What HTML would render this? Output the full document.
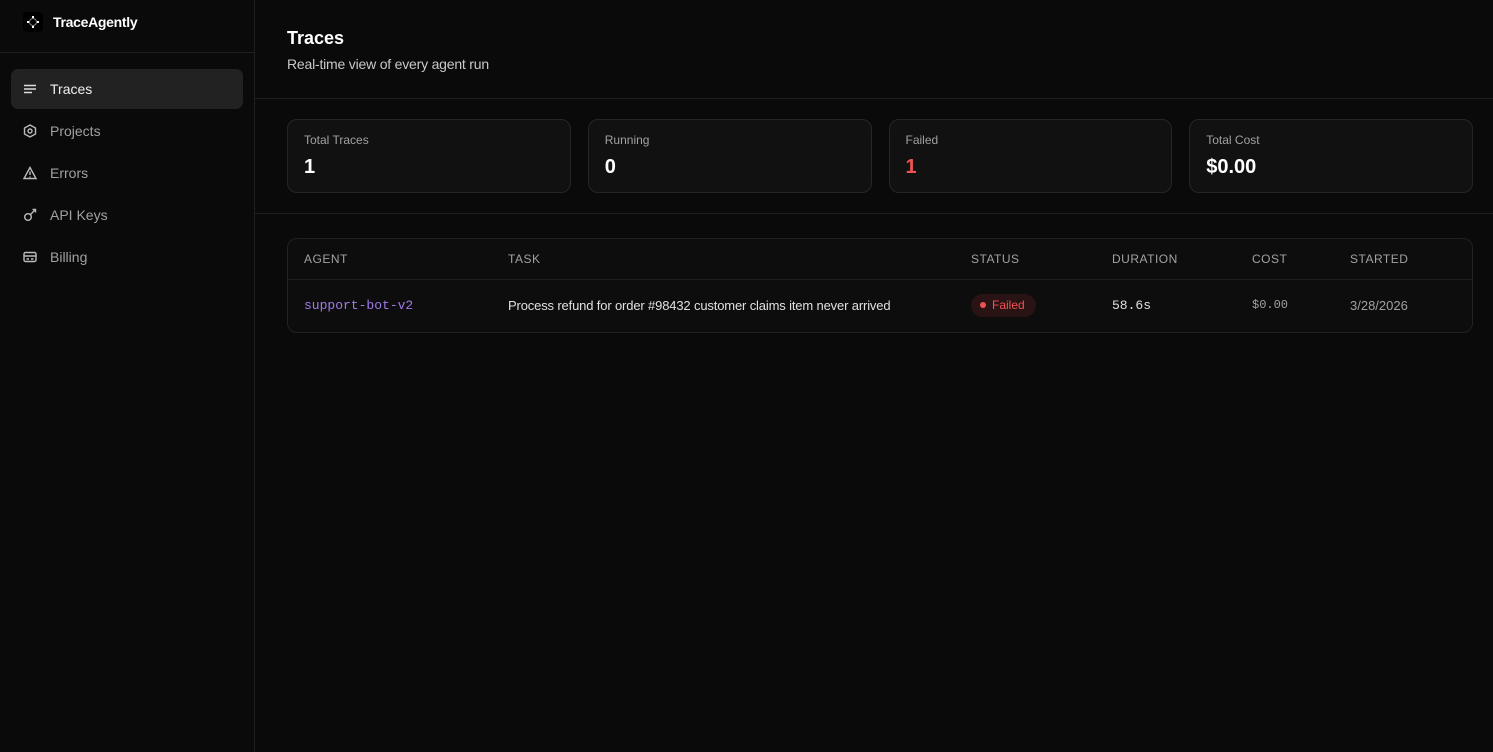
<!DOCTYPE html>
<html><head><meta charset="utf-8"><style>
*{box-sizing:border-box;margin:0;padding:0}
body{width:1493px;height:752px;background:#0a0a0a;font-family:"Liberation Sans",sans-serif;color:#ededed;position:relative;overflow:hidden}
.side{position:absolute;left:0;top:0;width:255px;height:752px;border-right:1px solid #1f1f1f}
.logo{height:53px;border-bottom:1px solid #1f1f1f;display:flex;align-items:center;padding-left:23px;padding-bottom:9px}
.lbox{width:20px;height:20px;background:#000;border-radius:4px;margin-right:10px;display:flex;align-items:center;justify-content:center}
.lt{font-size:14px;font-weight:bold;color:#fff;letter-spacing:-0.3px}
.nav{padding:16px 11px}
.it{height:40px;border-radius:7px;display:flex;align-items:center;padding-left:12px;font-size:14px;color:#a1a1a1;margin-bottom:2px}
.it.a{background:#222;color:#f0f0f0}
.it svg{margin-right:13px}
.main{position:absolute;left:255px;top:0;width:1238px}
.hd{height:99px;border-bottom:1px solid #1f1f1f;padding:27px 32px}
.hd h1{font-size:18px;font-weight:bold;color:#fff;line-height:22px}
.hd p{font-size:14px;color:#c8c8c8;margin-top:7px;letter-spacing:-0.2px}
.stats{height:115px;border-bottom:1px solid #1f1f1f;padding:20px 20px 20px 32px;display:flex;gap:17px}
.c{flex:1;height:74px;border:1px solid #262626;border-radius:10px;background:#111;padding:13px 16px}
.c .l{font-size:12px;color:#a1a1a1}
.c .v{font-size:20px;font-weight:bold;color:#fff;margin-top:9px}
.tbl{position:absolute;left:32px;top:238px;width:1186px;height:95px;border:1px solid #222;border-radius:10px;background:#0d0d0d;overflow:hidden}
.th{height:41px;border-bottom:1px solid #1f1f1f;position:relative;font-size:12px;color:#a1a1a1;letter-spacing:0.5px}
.tr{height:53px;position:relative;font-size:13px}
.th span,.tr span{position:absolute}
.th span{top:13px}
.tr span{top:18px}
.m{font-family:"Liberation Mono",monospace}
.badge{top:14px!important;background:#2a1315;color:#f05252;border-radius:12px;padding:4px 11px 4px 9px;font-size:12px;height:23px}
.badge i{display:inline-block;width:6px;height:6px;border-radius:3px;background:#f05252;margin-right:6px;vertical-align:1px}
</style></head><body>
<div class="side">
<div class="logo"><div class="lbox"><svg width="14" height="14" viewBox="0 0 14 14"><circle cx="7" cy="7" r="3.5" fill="none" stroke="#888" stroke-width="1"/><rect x="6" y="1" width="2" height="2" fill="#fff"/><rect x="6" y="11" width="2" height="2" fill="#fff"/><rect x="1" y="6" width="2" height="2" fill="#fff"/><rect x="11" y="6" width="2" height="2" fill="#fff"/></svg></div><span class="lt">TraceAgently</span></div>
<div class="nav">
<div class="it a"><svg width="14" height="14" viewBox="0 0 14 14" stroke="#ddd" stroke-width="1.5"><path d="M1 3.5h12M1 7h12M1 10.5h8"/></svg>Traces</div>
<div class="it"><svg width="14" height="14" viewBox="0 0 14 14" fill="none" stroke="#bbb" stroke-width="1.4"><path d="M7 1l5.5 3v6L7 13 1.5 10V4z"/><circle cx="7" cy="7" r="2"/></svg>Projects</div>
<div class="it"><svg width="14" height="14" viewBox="0 0 14 14" fill="none" stroke="#bbb" stroke-width="1.4"><path d="M7 1.5L13 12.5H1z"/><path d="M7 5.5v3.5M7 10.5v1"/></svg>Errors</div>
<div class="it"><svg width="14" height="14" viewBox="0 0 14 14" fill="none" stroke="#bbb" stroke-width="1.4"><circle cx="5" cy="9" r="3.3"/><path d="M7.5 6.5L12.5 1.5M9.5 1.5h3v3"/></svg>API Keys</div>
<div class="it"><svg width="14" height="14" viewBox="0 0 14 14" fill="none" stroke="#bbb" stroke-width="1.4"><rect x="1" y="2.5" width="12" height="9" rx="1.5"/><path d="M1 6h12M3.5 9h2.5M8 9h2.5"/></svg>Billing</div>
</div></div>
<div class="main">
<div class="hd"><h1>Traces</h1><p>Real-time view of every agent run</p></div>
<div class="stats">
<div class="c"><div class="l">Total Traces</div><div class="v">1</div></div>
<div class="c"><div class="l">Running</div><div class="v">0</div></div>
<div class="c"><div class="l">Failed</div><div class="v" style="color:#f05252">1</div></div>
<div class="c"><div class="l">Total Cost</div><div class="v">$0.00</div></div>
</div>
<div class="tbl">
<div class="th"><span style="left:16px">AGENT</span><span style="left:220px">TASK</span><span style="left:683px">STATUS</span><span style="left:824px">DURATION</span><span style="left:964px">COST</span><span style="left:1062px">STARTED</span></div>
<div class="tr"><span class="m" style="left:16px;color:#9f7aea">support-bot-v2</span><span style="left:220px;color:#e0e0e0;letter-spacing:-0.15px">Process refund for order #98432 customer claims item never arrived</span><span class="badge" style="left:683px"><i></i>Failed</span><span class="m" style="left:824px;color:#e0e0e0">58.6s</span><span class="m" style="left:964px;color:#a1a1a1;font-size:12px">$0.00</span><span style="left:1062px;color:#a1a1a1">3/28/2026</span></div>
</div>
</div>
</body></html>
